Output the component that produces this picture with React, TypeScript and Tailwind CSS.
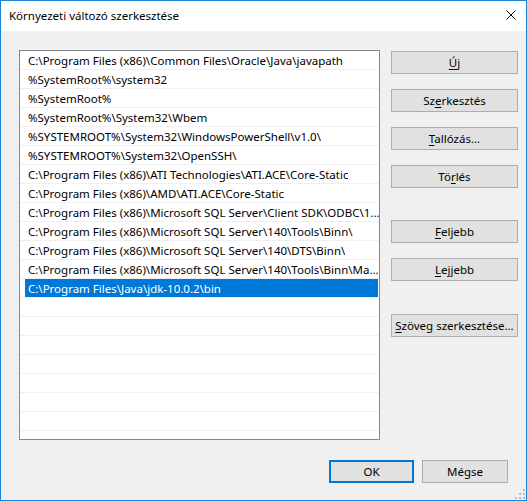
const paths = [
  "C:\\Program Files (x86)\\Common Files\\Oracle\\Java\\javapath",
  "%SystemRoot%\\system32",
  "%SystemRoot%",
  "%SystemRoot%\\System32\\Wbem",
  "%SYSTEMROOT%\\System32\\WindowsPowerShell\\v1.0\\",
  "%SYSTEMROOT%\\System32\\OpenSSH\\",
  "C:\\Program Files (x86)\\ATI Technologies\\ATI.ACE\\Core-Static",
  "C:\\Program Files (x86)\\AMD\\ATI.ACE\\Core-Static",
  "C:\\Program Files (x86)\\Microsoft SQL Server\\Client SDK\\ODBC\\1...",
  "C:\\Program Files (x86)\\Microsoft SQL Server\\140\\Tools\\Binn\\",
  "C:\\Program Files (x86)\\Microsoft SQL Server\\140\\DTS\\Binn\\",
  "C:\\Program Files (x86)\\Microsoft SQL Server\\140\\Tools\\Binn\\Ma...",
  "C:\\Program Files\\Java\\jdk-10.0.2\\bin",
];

const SELECTED = 12;

function Btn({ pre, u, post, className = "" }: { pre?: string; u: string; post: string; className?: string }) {
  return (
    <button
      className={
        "h-[23px] w-[127px] bg-[#e1e1e1] border border-[#adadad] text-black text-[11.5px] leading-none flex items-center justify-center " +
        className
      }
    >
      <span>
        {pre}
        <span className="underline underline-offset-2">{u}</span>
        {post}
      </span>
    </button>
  );
}

export default function App() {
  const rows = Array.from({ length: 21 }, (_, i) => paths[i] ?? "");
  return (
    <div
      className="w-[527px] h-[501px] border border-[#1883d7] bg-[#f0f0f0] flex flex-col text-black overflow-hidden"
      style={{ fontFamily: '"Segoe UI", "Noto Sans", sans-serif' }}
    >
      {/* title bar */}
      <div className="h-[30px] bg-white flex items-center justify-between pl-[8px] pr-[10px] shrink-0">
        <span className="text-[11.5px]">Környezeti változó szerkesztése</span>
        <svg width="10" height="10" viewBox="0 0 10 10" className="mt-[-2px]">
          <path d="M0.5 0.5 L9.5 9.5 M9.5 0.5 L0.5 9.5" stroke="#000" strokeWidth="1" />
        </svg>
      </div>

      <div className="flex pl-[18px] pt-[19px] gap-[11px]">
        {/* list */}
        <div className="w-[361px] h-[390px] border border-[#828790] bg-white overflow-hidden text-[11.5px]">
          {rows.map((p, i) => (
            <div key={i} className="h-[19px] border-b border-[#f0f0f0] flex">
              {i === SELECTED ? (
                <div className="ml-[5px] mr-[1px] flex-1 bg-[#0078d7] text-white pl-[3px] pt-px flex items-center whitespace-nowrap">
                  {p}
                </div>
              ) : (
                <div className="pl-[8px] pt-px flex items-center whitespace-nowrap overflow-hidden">{p}</div>
              )}
            </div>
          ))}
        </div>

        {/* side buttons */}
        <div className="flex flex-col pt-px">
          <Btn u="Ú" post="j" />
          <Btn pre="Sz" u="e" post="rkesztés" className="mt-[15px]" />
          <Btn u="T" post="allózás..." className="mt-[15px]" />
          <Btn pre="Tö" u="r" post="lés" className="mt-[15px]" />
          <Btn u="F" post="eljebb" className="mt-[32px]" />
          <Btn u="L" post="ejjebb" className="mt-[15px]" />
          <Btn u="S" post="zöveg szerkesztése..." className="mt-[33px]" />
        </div>
      </div>

      {/* bottom */}
      <div className="flex justify-end gap-[8px] pr-[18px] mt-[20px] relative flex-1">
        <button className="h-[23px] w-[85px] bg-[#e1e1e1] border-2 border-[#0078d7] text-[11.5px] leading-none flex items-center justify-center">
          OK
        </button>
        <button className="h-[23px] w-[86px] bg-[#e1e1e1] border border-[#adadad] text-[11.5px] leading-none flex items-center justify-center">
          Mégse
        </button>
        <svg width="10" height="10" viewBox="0 0 10 10" className="absolute right-[1px] bottom-[1px]">
          <rect x="8" y="0" width="2" height="2" fill="#bcbcbc" />
          <rect x="4" y="4" width="2" height="2" fill="#bcbcbc" />
          <rect x="8" y="4" width="2" height="2" fill="#bcbcbc" />
          <rect x="0" y="8" width="2" height="2" fill="#bcbcbc" />
          <rect x="4" y="8" width="2" height="2" fill="#bcbcbc" />
          <rect x="8" y="8" width="2" height="2" fill="#bcbcbc" />
        </svg>
      </div>
    </div>
  );
}
